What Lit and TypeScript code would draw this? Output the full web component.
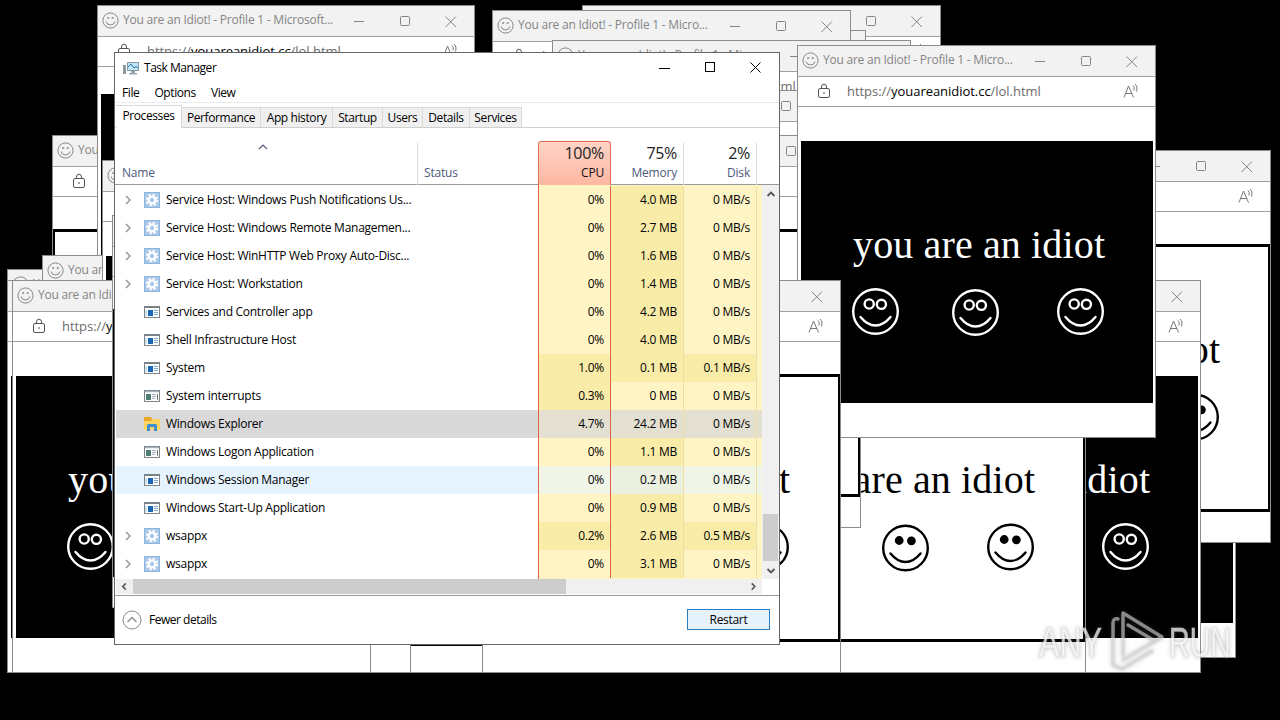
import { LitElement, html, svg, css, nothing } from "lit";
import { customElement, property } from "lit/decorators.js";

type Win = { x: number; y: number; w?: number; dark?: boolean; artH?: number; full?: boolean };

/* Ordered from the bottom of the stack to the top. */
const WINDOWS: Win[] = [
  { x: 582, y: 5 },
  { x: 507, y: 30 },
  { x: 492, y: 10 },
  { x: 552, y: 40 },
  { x: 497, y: 90 },
  { x: 7, y: 269 },
  { x: 52, y: 135 },
  { x: 97, y: 5, w: 378, dark: true, full: true },
  { x: 42, y: 255 },
  { x: 102, y: 160, dark: true },
  { x: 52, y: 280 },
  { x: 407, y: 280, w: 362, dark: true, artH: 270 },
  { x: 52, y: 280 },
  { x: 7, y: 280, dark: true },
  { x: 12, y: 280, dark: true },
  { x: 112, y: 215 },
  { x: 877, y: 265, dark: true },
  { x: 912, y: 150 },
  { x: 842, y: 280, dark: true },
  { x: 727, y: 280 },
  { x: 502, y: 135 },
  { x: 797, y: 45, dark: true },
  { x: 482, y: 280 },
];

@customElement("idiot-window")
export class IdiotWindow extends LitElement {
  @property({ type: Boolean }) dark = false;
  @property({ type: Boolean }) full = false;
  @property({ type: Number }) artH = 262;

  static styles = css`
    :host {
      display: flex;
      flex-direction: column;
      box-sizing: border-box;
      height: 393px;
      background: #fff;
      border: 1px solid #8c8c8c;
      overflow: hidden;
      font-family: "Open Sans", "Noto Sans", sans-serif;
    }
    .title {
      display: flex;
      align-items: center;
      height: 30px;
      flex: none;
      box-sizing: content-box;
      background: #f2f2f2;
      border-bottom: 1px solid #a0a0a0;
      color: #858585;
      padding-left: 4px;
    }
    .name {
      flex: 1;
      white-space: nowrap;
      overflow: hidden;
      margin-left: 4px;
      font-size: 12px;
      letter-spacing: -0.23px;
      line-height: 20px;
      padding-bottom: 2px;
    }
    .title svg:first-child {
      margin-bottom: 1px;
    }
    .btns {
      flex: none;
    }
    .addr {
      display: flex;
      align-items: center;
      height: 27px;
      flex: none;
      border-bottom: 1px solid #a0a0a0;
      color: #6c6c6c;
      padding: 0 15px 2px 19px;
      font-size: 13px;
    }
    .url {
      flex: 1;
      margin-left: 15px;
      white-space: nowrap;
      letter-spacing: -0.04px;
    }
    .url b {
      font-weight: 400;
      color: #000;
    }
    .art {
      flex: none;
      display: block;
      box-sizing: border-box;
    }
    .art.light {
      margin: 32px 0 0 -1px;
      width: calc(100% + 2px);
      height: 268px;
      border: 3px solid #000;
      padding: 0;
    }
    .art.dark {
      margin: 34px 0 0 3px;
      width: calc(100% - 5px);
      background: #000;
    }
    .art.dark.tall {
      margin: 27px 0 0 3px;
    }
    svg {
      display: block;
      flex: none;
    }
    .art svg {
      overflow: visible;
    }
    .shout {
      font-family: "Liberation Serif", serif;
      font-size: 40px;
    }
  `;

  face(cx: number, cy: number) {
    const c = this.dark ? "#fff" : "#000";
    const eye = this.dark ? "none" : c;
    return svg`<g fill="none" stroke=${c} stroke-width="2.4" stroke-linecap="round">
      <circle cx=${cx} cy=${cy} r="22.3" stroke-width="2.4"></circle>
      <circle cx=${cx - 6.3} cy=${cy - 7.5} r=${this.dark ? 4.6 : 3.2} fill=${eye}></circle>
      <circle cx=${cx + 5.9} cy=${cy - 7.2} r=${this.dark ? 4.6 : 3.2} fill=${eye}></circle>
      <path d="M${cx - 15} ${cy + 5.5}Q${cx - 8} ${cy + 14} ${cx} ${cy + 14}T${cx + 15} ${cy + 5.5}"></path>
    </g>`;
  }

  render() {
    const d = this.dark;
    /* Offset of the drawing's origin from the window's corner. */
    const ox = d ? -4 : -3;
    const oy = d ? -96.5 : -97;
    return html`
      <div class="title">
        <svg width="17" height="17" viewBox="0 0 17 17" fill="none" stroke="#858585">
          <circle cx="8.5" cy="8.5" r="7.6"></circle>
          <path d="M4 9.5Q5 13 8.5 13T13 9.5"></path>
          <path d="M5.2 6h2M9.7 6h2" stroke-width="1.6"></path>
        </svg>
        <span class="name">You are an Idiot! - Profile 1 - ${this.full ? "Microsoft..." : "Micro..."}</span>
        <svg class="btns" width="125" height="30" fill="none" stroke="#858585">
          <path d="M5 15.5h10M96.5 10.5l10.5 10.500M107 10.500l-10.500 10.500"></path>
          <rect x="51.500" y="10.500" width="9" height="9" rx="1"></rect>
        </svg>
      </div>
      <div class="addr">
        <svg width="15" height="16" viewBox="0 0 15 16" fill="none" stroke="#555">
          <rect x="1.500" y="5.500" width="11" height="9" rx="1.500"></rect>
          <path d="M4.500 5.500V4a2.500 2.800 0 0 1 5 0v1.500"></path>
          <circle cx="7" cy="10" r=".6" fill="#555" stroke-width=".5"></circle>
        </svg>
        <span class="url">https://<b>youareanidiot.cc</b>/lol.html</span>
        <svg width="17" height="16" viewBox="0 0 17 16" fill="none" stroke="#777">
          <path d="M1 14.500L5.500 3L10.500 14.500M3 10.500h6M10 2.500q2 1.500 1 5M12 1q3 2.500 1.500 7.500"></path>
        </svg>
      </div>
      <div class="art ${d ? "dark" : "light"} ${this.full ? "tall" : ""}" style="${d ? `height:${this.artH}px` : ""}">
        <svg width="350" height="200">
          <g transform="translate(${ox} ${oy})">
            <text class="shout" x="56" y="213" textLength="252" fill=${d ? "#fff" : "#000"}>you are an idiot</text>
            ${this.face(78.5, 267)}${this.face(178.500, 268)}${this.face(283.500, 267)}
          </g>
        </svg>
      </div>
    `;
  }
}

type Row = [string, "gear" | "app" | "sys" | "folder", string, string, string];
const ROWS: Row[] = [
  ["Service Host: Windows Push Notifications Us...", "gear", "0%", "4.0 MB", "0 MB/s"],
  ["Service Host: Windows Remote Managemen...", "gear", "0%", "2.7 MB", "0 MB/s"],
  ["Service Host: WinHTTP Web Proxy Auto-Disc...", "gear", "0%", "1.6 MB", "0 MB/s"],
  ["Service Host: Workstation", "gear", "0%", "1.4 MB", "0 MB/s"],
  ["Services and Controller app", "app", "0%", "4.2 MB", "0 MB/s"],
  ["Shell Infrastructure Host", "app", "0%", "4.0 MB", "0 MB/s"],
  ["System", "app", "1.0%", "0.1 MB", "0.1 MB/s"],
  ["System interrupts", "sys", "0.3%", "0 MB", "0 MB/s"],
  ["Windows Explorer", "folder", "4.7%", "24.2 MB", "0 MB/s"],
  ["Windows Logon Application", "sys", "0%", "1.1 MB", "0 MB/s"],
  ["Windows Session Manager", "app", "0%", "0.2 MB", "0 MB/s"],
  ["Windows Start-Up Application", "app", "0%", "0.9 MB", "0 MB/s"],
  ["wsappx", "gear", "0.2%", "2.6 MB", "0.5 MB/s"],
  ["wsappx", "gear", "0%", "3.1 MB", "0 MB/s"],
];

const TABS: [string, number][] = [
  ["Processes", 66],
  ["Performance", 79],
  ["App history", 72],
  ["Startup", 50],
  ["Users", 40],
  ["Details", 47],
  ["Services", 52],
];

const ICONS = {
  gear: svg`<rect width="16" height="16" fill="#a9c9e8"></rect><rect x=".5" y=".5" width="15" height="15" fill="none" stroke="#8fb4da"></rect>
    <circle cx="8" cy="8" r="3.400" fill="none" stroke="#fff" stroke-width="2.400"></circle>
    <circle cx="8" cy="8" r="5.300" fill="none" stroke="#fff" stroke-width="2" stroke-dasharray="2.080 2.080"></circle>`,
  app: svg`<rect x=".5" y="2.500" width="15" height="11" fill="#fff" stroke="#7b8288"></rect><path d="M0 3h16" stroke="#7b8288" stroke-width="2"></path>
    <rect x="4" y="6" width="5" height="6" fill="#1767b5"></rect><path d="M10 6.500h4M10 8.500h4M10 10.500h4" stroke="#7fa8cf"></path><path d="M2 6v6" stroke="#cfe0ef" stroke-width="2"></path>`,
  sys: svg`<rect x=".5" y="2.500" width="15" height="11" fill="#fff" stroke="#7b8288"></rect><path d="M1 3.500h14" stroke="#a9b0b5" stroke-width="1.500"></path>
    <rect x="2" y="6" width="5" height="6" fill="#4c7f78"></rect><path d="M8 6.500h4M8 8.500h4M8 10.500h3" stroke="#9ab"></path><path d="M13.500 6v6" stroke="#777"></path>`,
  folder: svg`<path d="M0 1h7l1 2h8v11H0z" fill="#e9a825"></path><path d="M0 5h7l1-2h8v11H0z" fill="#fcd462"></path>
    <path d="M3 15V9.500q0-1.500 1.500-1.500h7q1.500 0 1.500 1.500V15h-3v-4H6v4z" fill="#3d8fd1"></path>`,
};

@customElement("task-manager")
export class TaskManager extends LitElement {
  static styles = css`
    :host {
      display: flex;
      flex-direction: column;
      box-sizing: border-box;
      width: 666px;
      height: 593px;
      border: 1px solid #666;
      background: #fff;
      color: #000;
      font: 12px/16px "Open Sans", "Noto Sans", sans-serif;
      letter-spacing: -0.27px;
      white-space: nowrap;
    }
    svg {
      display: block;
      flex: none;
    }
    .caption {
      display: flex;
      align-items: center;
      height: 30px;
      padding: 0 0 0 8px;
      flex: none;
    }
    .caption span {
      flex: 1;
      margin-left: 5px;
      letter-spacing: -0.48px;
    }
    .menu {
      display: flex;
      gap: 15px;
      box-sizing: border-box;
      height: 20px;
      padding: 1px 0 0 7px;
      flex: none;
      align-items: center;
      border-bottom: 1px solid #ececec;
      margin-bottom: 1px;
      letter-spacing: -0.4px;
    }
    .tabs {
      display: flex;
      align-items: flex-end;
      height: 23px;
      flex: none;
      border-bottom: 1px solid #d0d0d0;
      padding-left: 1px;
      letter-spacing: -0.4px;
    }
    .tab {
      box-sizing: border-box;
      height: 20px;
      background: #f0f0f0;
      border: 1px solid #d9d9d9;
      border-width: 1px 1px 0 0;
      text-align: center;
      line-height: 19px;
    }
    .tab.on {
      height: 23px;
      background: #fff;
      line-height: 20px;
      margin-bottom: -1px;
    }
    .grid {
      display: grid;
      grid-template-columns: 303px 120px 73px 73px 73px 5px 16px;
    }
    .head {
      flex: none;
      height: 56px;
      border-bottom: 1px solid #9a9a9a;
      color: #4c5b7c;
    }
    .h {
      display: flex;
      flex-direction: column;
      justify-content: flex-end;
      box-sizing: border-box;
      border-right: 1px solid #dcdcdc;
      padding: 0 6px 4px 7px;
      margin-top: 15px;
      letter-spacing: -0.2px;
    }
    .h.plain {
      border-right: 0;
      padding-left: 6px;
    }
    .h svg {
      align-self: center;
      margin: 0 0 15px -8px;
    }
    .h.num {
      align-items: flex-end;
      text-align: right;
    }
    .pct {
      font-size: 16px;
      line-height: 20px;
      color: #222;
      margin-bottom: 2px;
      letter-spacing: -0.3px;
    }
    .h.cpu {
      margin-top: 13px;
      color: #111;
      border: 1px solid #e0705a;
      border-bottom: 0;
      border-radius: 3px 3px 0 0;
      background: linear-gradient(#ffd3c6, #fdb7a2);
    }
    .mid {
      display: flex;
      height: 394px;
      flex: none;
    }
    .rows {
      width: 647px;
      padding-top: 1px;
      background: linear-gradient(90deg, #fff 423px, #e0604a 423px 424px, #fff4c4 424px);
      flex: none;
    }
    .row {
      grid-template-columns: 423px 73px 73px 73px 5px;
      height: 28px;
      line-height: 28px;
    }
    .proc {
      display: flex;
      align-items: center;
      padding-left: 8px;
      margin-left: 1px;
    }
    .proc .ic {
      margin-left: 12px;
    }
    .proc span {
      margin-left: 6px;
    }
    .cell {
      box-sizing: border-box;
      text-align: right;
      padding-right: 6px;
      background: #fff4c4;
      border-right: 1px solid #eddf9f;
    }
    .cell.hot {
      background: #f9eca8;
    }
    .cell.c {
      border-left: 1px solid #e0604a;
      border-right: 1px solid #e0604a;
    }
    .end {
      background: #fff4c4;
    }
    .sel .proc {
      background: #d9d9d9;
    }
    .sel .cell,
    .sel .end {
      background: #e3e0d2;
    }
    .hover .proc {
      background: #e5f3ff;
    }
    .hover .cell,
    .hover .end {
      background: #f0f5e8;
    }
    .hover .cell.hot {
      background: #ebf0e0;
    }
    .vbar {
      width: 17px;
      display: flex;
      flex-direction: column;
      align-items: center;
      justify-content: space-between;
      background: #f0f0f0;
    }
    .vthumb {
      width: 15px;
      height: 47px;
      background: #cdcdcd;
      margin-top: 310px;
    }
    .hbar {
      display: flex;
      align-items: center;
      height: 15px;
      flex: none;
      margin: 0 17px 1px 1px;
      background: #f0f0f0;
    }
    .hthumb {
      width: 433px;
      height: 15px;
      background: #cdcdcd;
      margin-right: auto;
    }
    .foot {
      display: flex;
      align-items: center;
      flex: 1;
      border-top: 1px solid #9a9a9a;
      padding: 0 9px 0 7px;
      letter-spacing: -0.48px;
    }
    .foot span {
      flex: 1;
      margin-left: 7px;
    }
    .btn {
      box-sizing: border-box;
      width: 83px;
      height: 21px;
      border: 1px solid #2a7fc0;
      background: #e5f1fb;
      text-align: center;
      font: inherit;
      letter-spacing: -0.3px;
      color: inherit;
      padding: 0;
      margin-bottom: 1px;
    }
  `;

  arrow(d: string, s = "#555", w = 16, h = 17) {
    return html`<svg width=${w} height=${h} viewBox="0 0 16 17" fill="none" stroke=${s} stroke-width="1.800"><path d=${d}></path></svg>`;
  }

  render() {
    return html`
      <div class="caption">
        <svg width="16" height="16" viewBox="0 0 16 16">
          <rect x="4.500" y="2.500" width="11" height="8" fill="#bfe6fa" stroke="#8b979e"></rect>
          <path d="M5 7l3-3 3 4 2-1.500 2 1.500" fill="none" stroke="#2f7397"></path>
          <path d="M8 11h4v2h2v1.500H6V13h2z" fill="#9aa5ab"></path>
          <path d="M0 5h3v9H0z" fill="#8b979e"></path>
        </svg>
        <span>Task Manager</span>
        <svg width="124" height="30" fill="none" stroke="#000">
          <path d="M4 15.500h11M95.500 9.500l10 10M105.500 9.500l-10 10"></path>
          <rect x="50.500" y="9.500" width="9" height="9"></rect>
        </svg>
      </div>
      <div class="menu"><span>File</span><span>Options</span><span>View</span></div>
      <div class="tabs">
        ${TABS.map(([t, w], i) => html`<div class="tab ${i ? "" : "on"}" style="width:${w}px">${t}</div>`)}
      </div>
      <div class="grid head">
        <div class="h">
          <svg width="10" height="6" fill="none" stroke="#555f78" stroke-width="1.200"><path d="M1 5l4-4 4 4"></path></svg>
          Name
        </div>
        <div class="h plain">Status</div>
        <div class="h num cpu"><span class="pct">100%</span>CPU</div>
        <div class="h num"><span class="pct">75%</span>Memory</div>
        <div class="h num"><span class="pct">2%</span>Disk</div>
      </div>
      <div class="mid">
        <div class="rows">
          ${ROWS.map(
            ([name, icon, cpu, mem, disk], i) => html`<div class="grid row ${i === 8 ? "sel" : i === 10 ? "hover" : ""}">
              <div class="proc">
                <svg width="8" height="10" fill="none" stroke="#999" stroke-width="1.500">
                  ${icon === "gear" ? svg`<path d="M2 1l4 4-4 4"></path>` : nothing}
                </svg>
                <svg class="ic" width="16" height="16" viewBox="0 0 16 16">${ICONS[icon]}</svg>
                <span>${name}</span>
              </div>
              <div class="cell c ${cpu === "0%" ? "" : "hot"}">${cpu}</div>
              <div class="cell ${mem === "0 MB" ? "" : "hot"}">${mem}</div>
              <div class="cell ${disk === "0 MB/s" ? "" : "hot"}">${disk}</div>
              <div class="end"></div>
            </div>`,
          )}
        </div>
        <div class="vbar">
          ${this.arrow("M4.500 11l3.500-3.500 3.500 3.500")}
          <div class="vthumb"></div>
          ${this.arrow("M4.500 7l3.500 3.500 3.500-3.500")}
        </div>
      </div>
      <div class="hbar">
        ${this.arrow("M9.500 5L6 8.500l3.500 3.500", "#555", 17, 15)}
        <div class="hthumb"></div>
        ${this.arrow("M6 5l3.500 3.500L6 12", "#555", 17, 15)}
      </div>
      <div class="foot">
        <svg width="20" height="20" fill="none" stroke="#8a8a8a">
          <circle cx="10" cy="10" r="9"></circle>
          <path d="M5.500 12l4.500-4.500 4.500 4.500" stroke-width="1.300"></path>
        </svg>
        <span>Fewer details</span>
        <button class="btn">Restart</button>
      </div>
    `;
  }
}

@customElement("app-root")
export class AppRoot extends LitElement {
  static styles = css`
    :host {
      display: block;
      position: relative;
      width: 1280px;
      height: 720px;
      background: #000;
      overflow: hidden;
    }
    idiot-window,
    task-manager,
    .mark {
      position: absolute;
    }
    task-manager {
      left: 114px;
      top: 52px;
    }
    .mark {
      left: 1030px;
      top: 600px;
      filter: drop-shadow(0 0 2px rgba(90, 90, 90, 0.5));
    }
    .mark text {
      font: 43px "Liberation Sans", sans-serif;
    }
  `;

  render() {
    return html`
      ${WINDOWS.map(
        (w) => html`<idiot-window
          style="left:${w.x}px;top:${w.y}px;width:${w.w ?? 359}px"
          ?dark=${!!w.dark}
          ?full=${!!w.full}
          .artH=${w.artH ?? 262}
        ></idiot-window>`,
      )}
      <task-manager></task-manager>
      <svg class="mark" width="240" height="80">
        <g fill="#ffffff" fill-opacity="0.72" stroke="#d8d8d8" stroke-opacity="0.5" stroke-width="1">
          <text x="9" y="57" textLength="63" lengthAdjust="spacingAndGlyphs">ANY</text>
          <text x="139" y="57" textLength="62" lengthAdjust="spacingAndGlyphs">RUN</text>
        </g>
        <g fill="none" stroke="#d4d4d4" stroke-opacity="0.62" stroke-width="3.5" stroke-linejoin="round" stroke-linecap="round">
          <path d="M93 55V13l39 24-39 23"></path>
          <path d="M98 25l27 16"></path>
          <path d="M88 19q-5-1-5 4v42l9 4 30-18"></path>
        </g>
      </svg>
    `;
  }
}
